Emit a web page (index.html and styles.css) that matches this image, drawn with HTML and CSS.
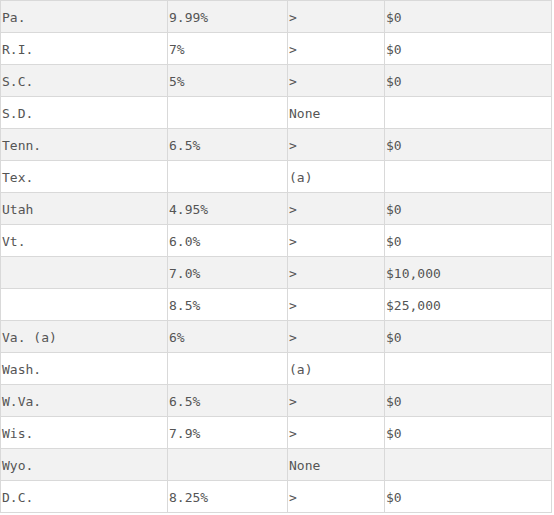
FILE: index.html
```html
<!DOCTYPE html>
<html>
<head>
<meta charset="utf-8">
<link rel="stylesheet" href="styles.css">
</head>
<body>
<table class="rates">
  <colgroup>
    <col class="c1"><col class="c2"><col class="c3"><col class="c4">
  </colgroup>
  <tbody>
    <tr><td>Pa.</td><td>9.99%</td><td>&gt;</td><td>$0</td></tr>
    <tr><td>R.I.</td><td>7%</td><td>&gt;</td><td>$0</td></tr>
    <tr><td>S.C.</td><td>5%</td><td>&gt;</td><td>$0</td></tr>
    <tr><td>S.D.</td><td></td><td>None</td><td></td></tr>
    <tr><td>Tenn.</td><td>6.5%</td><td>&gt;</td><td>$0</td></tr>
    <tr><td>Tex.</td><td></td><td>(a)</td><td></td></tr>
    <tr><td>Utah</td><td>4.95%</td><td>&gt;</td><td>$0</td></tr>
    <tr><td>Vt.</td><td>6.0%</td><td>&gt;</td><td>$0</td></tr>
    <tr><td></td><td>7.0%</td><td>&gt;</td><td>$10,000</td></tr>
    <tr><td></td><td>8.5%</td><td>&gt;</td><td>$25,000</td></tr>
    <tr><td>Va. (a)</td><td>6%</td><td>&gt;</td><td>$0</td></tr>
    <tr><td>Wash.</td><td></td><td>(a)</td><td></td></tr>
    <tr><td>W.Va.</td><td>6.5%</td><td>&gt;</td><td>$0</td></tr>
    <tr><td>Wis.</td><td>7.9%</td><td>&gt;</td><td>$0</td></tr>
    <tr><td>Wyo.</td><td></td><td>None</td><td></td></tr>
    <tr><td>D.C.</td><td>8.25%</td><td>&gt;</td><td>$0</td></tr>
  </tbody>
</table>
</body>
</html>
```
FILE: styles.css
```css
html, body {
  margin: 0;
  padding: 0;
  background: #ffffff;
}
.rates {
  border-collapse: separate;
  border-spacing: 0;
  table-layout: fixed;
  width: 552px;
  border-top: 1px solid #d9d9d9;
  border-left: 1px solid #d9d9d9;
  font-family: "DejaVu Sans Mono", "Liberation Mono", monospace;
  font-size: 13px;
  color: #555555;
}
.c1 { width: 167px; }
.c2 { width: 120px; }
.c3 { width: 97px; }
.c4 { width: 167px; }
.rates td {
  box-sizing: border-box;
  height: 32px;
  padding: 1px 1px 0 1px;
  border-right: 1px solid #d9d9d9;
  border-bottom: 1px solid #d9d9d9;
  vertical-align: middle;
  white-space: pre;
  overflow: hidden;
}
.rates tr:nth-child(odd) td {
  background: #f2f2f2;
}
```
